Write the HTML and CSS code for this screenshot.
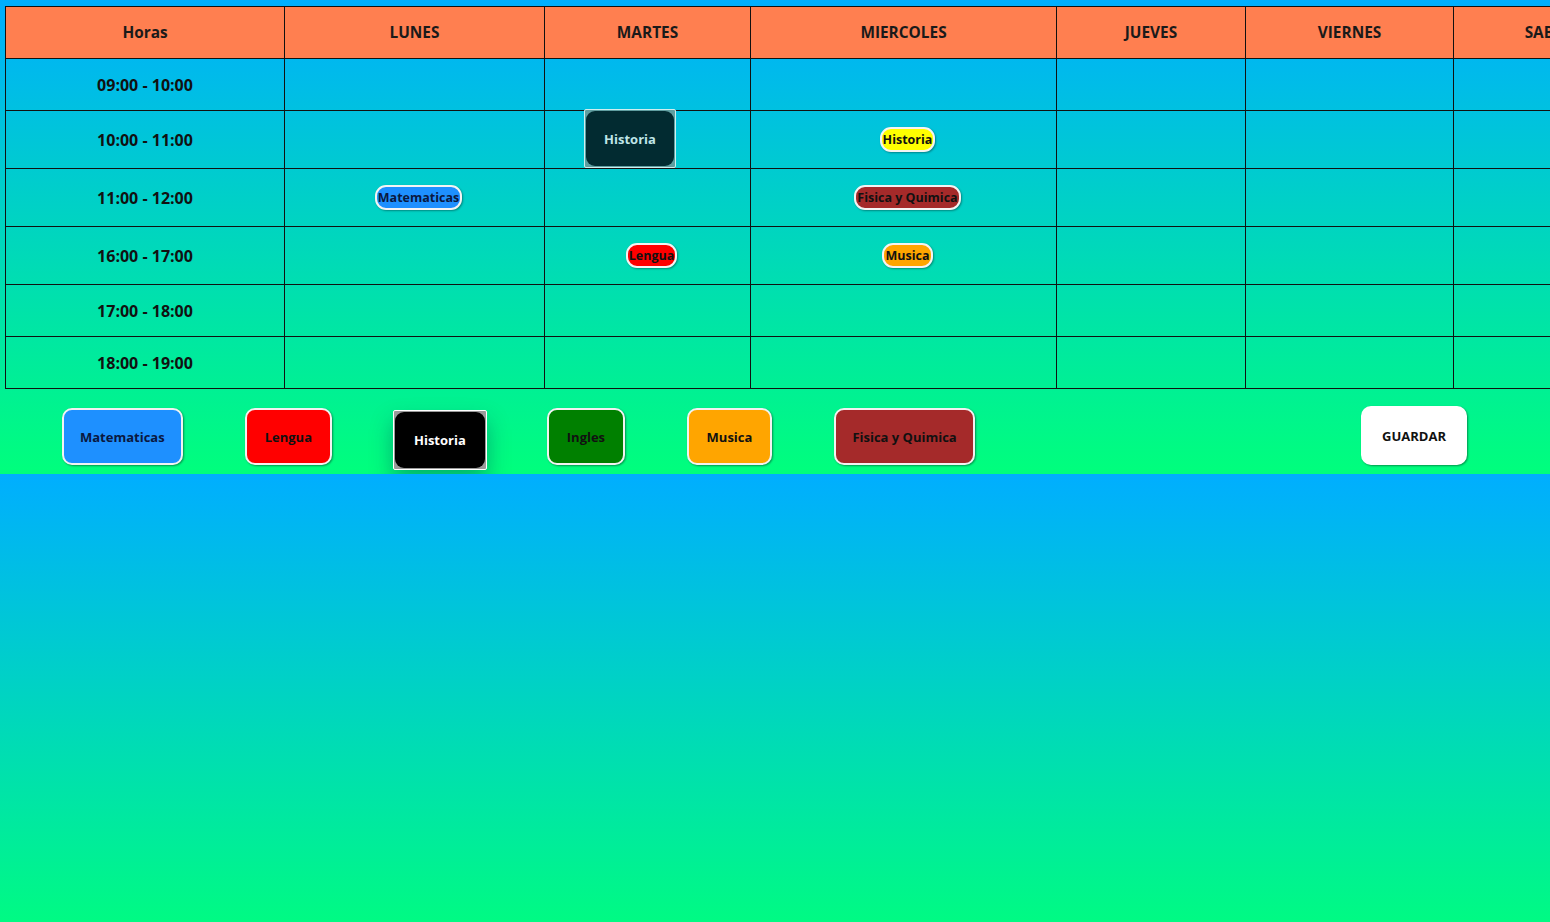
FILE: index.html
```html
<!DOCTYPE html>
<html lang="es">
<head>
<meta charset="utf-8">
<title>Horario</title>
<link rel="stylesheet" href="styles.css">
</head>
<body>
<div class="page">
  <div class="table-wrap">
    <table class="schedule">
      <colgroup>
        <col class="c-horas"><col class="c-lunes"><col class="c-martes"><col class="c-miercoles"><col class="c-jueves"><col class="c-viernes"><col class="c-sabado"><col class="c-domingo">
      </colgroup>
      <thead>
        <tr class="row-head">
          <th>Horas</th><th>LUNES</th><th>MARTES</th><th>MIERCOLES</th><th>JUEVES</th><th>VIERNES</th><th>SABADO</th><th>DOMINGO</th>
        </tr>
      </thead>
      <tbody>
        <tr class="row">
          <td class="hour">09:00 - 10:00</td><td></td><td></td><td></td><td></td><td></td><td></td><td></td>
        </tr>
        <tr class="row tall">
          <td class="hour">10:00 - 11:00</td><td></td>
          <td class="drop"><div class="ghost">Historia</div></td>
          <td><span class="chip yellow">Historia</span></td><td></td><td></td><td></td><td></td>
        </tr>
        <tr class="row tall">
          <td class="hour">11:00 - 12:00</td>
          <td><span class="chip blue">Matematicas</span></td><td></td>
          <td><span class="chip brown">Fisica y Quimica</span></td><td></td><td></td><td></td><td></td>
        </tr>
        <tr class="row tall">
          <td class="hour">16:00 - 17:00</td><td></td>
          <td><span class="chip red">Lengua</span></td>
          <td><span class="chip orange">Musica</span></td><td></td><td></td><td></td><td></td>
        </tr>
        <tr class="row">
          <td class="hour">17:00 - 18:00</td><td></td><td></td><td></td><td></td><td></td><td></td><td></td>
        </tr>
        <tr class="row">
          <td class="hour">18:00 - 19:00</td><td></td><td></td><td></td><td></td><td></td><td></td><td></td>
        </tr>
      </tbody>
    </table>
  </div>
  <div class="bar">
    <button class="btn blue">Matematicas</button>
    <button class="btn red">Lengua</button>
    <button class="btn black dragging">Historia</button>
    <button class="btn green">Ingles</button>
    <button class="btn orange">Musica</button>
    <button class="btn brown">Fisica y Quimica</button>
    <button class="btn white save">GUARDAR</button>
  </div>
</div>
</body>
</html>
```
FILE: styles.css
```css
html {
  background: linear-gradient(180deg, #00aeff 0%, #00ff7c 100%);
  background-size: 100% 474px;
  background-repeat: repeat-y;
  min-height: 100%;
}
body {
  margin: 0;
  overflow: hidden;
  font-family: "Open Sans", "Noto Sans", sans-serif;
  color: #111;
}
.page {
  height: 474px;
  display: flex;
  flex-direction: column;
}
.table-wrap {
  padding: 6px 0 0 5px;
  overflow: hidden;
  flex: none;
}
.schedule {
  border-collapse: collapse;
  table-layout: fixed;
  width: 1870px;
}
.c-horas { width: 279px; }
.c-lunes { width: 260px; }
.c-martes { width: 206px; }
.c-miercoles { width: 306px; }
.c-jueves { width: 189px; }
.c-viernes { width: 208px; }
.c-sabado { width: 206px; }
.c-domingo { width: 216px; }

.schedule th,
.schedule td {
  border: 1px solid #111;
  padding: 0;
  text-align: center;
  vertical-align: middle;
  font-size: 14px;
  font-weight: 700;
}
.schedule th {
  background: #ff7f50;
  color: #1a1a1a;
  height: 51px;
  font-size: 15.4px;
}
.row td { height: 51px; }
.row.tall td { height: 57px; }
.schedule td.hour {
  color: #111;
  font-size: 16px;
}

.drop { position: relative; }
.ghost {
  position: absolute;
  top: -2px;
  left: 39px;
  width: 92px;
  height: 59px;
  border: 1px solid #cfeff0;
  border-radius: 2px;
  background: #5f9ea0;
  display: flex;
  align-items: center;
  justify-content: center;
  color: #bfe6e8;
  font-size: 13px;
  font-weight: 700;
  box-sizing: border-box;
  isolation: isolate;
}
.ghost::before {
  content: "";
  position: absolute;
  inset: 1px;
  border-radius: 9px;
  background: #022b31;
  z-index: -1;
}

.chip {
  display: inline-block;
  margin-left: 8px;
  padding: 2px 1px;
  border: 2px solid #f4f4f4;
  border-radius: 11px;
  font-size: 12.5px;
  font-weight: 700;
  line-height: 17px;
  color: #111;
  box-shadow: 1px 1px 2px rgba(0,0,0,0.35);
}
.chip.blue { color: #0a1840; }

.blue { background: #1e90ff; }
.red { background: #ff0000; }
.green { background: #008000; }
.orange { background: #ffa500; }
.brown { background: #a52a2a; }
.yellow { background: #ffff00; }
.white { background: #ffffff; }
.black { background: #000; }

.bar {
  flex: 1;
  display: flex;
  align-items: flex-start;
  gap: 62px;
  padding: 19px 83px 0 62px;
}
.btn {
  height: 57px;
  padding: 0 18px;
  border: 2px solid #f2f2f2;
  border-radius: 10px;
  font-family: "Open Sans", "Noto Sans", sans-serif;
  font-size: 13px;
  font-weight: 700;
  color: #111;
  box-shadow: 1px 1px 2px rgba(0,0,0,0.4);
}
.btn.blue { color: #0a1840; padding: 0 16px; }
.btn.orange { padding: 0 17.5px; }
.btn.brown { padding: 0 16.5px; }
.btn.dragging {
  position: relative;
  isolation: isolate;
  margin-top: 2px;
  margin-left: -1px;
  margin-right: -2px;
  height: 60px;
  padding: 0 20px;
  border: 1px solid #fff;
  border-radius: 2px;
  background: #9a9a9a;
  color: #fff;
  box-shadow: 0 12px 22px rgba(0,40,80,0.35);
}
.btn.dragging::before {
  content: "";
  position: absolute;
  inset: 1px;
  border-radius: 9px;
  background: #000;
  z-index: -1;
}
.btn.save {
  margin-left: auto;
  margin-top: -2px;
  height: 59px;
  padding: 0 19px;
  border-color: #fff;
}
```
